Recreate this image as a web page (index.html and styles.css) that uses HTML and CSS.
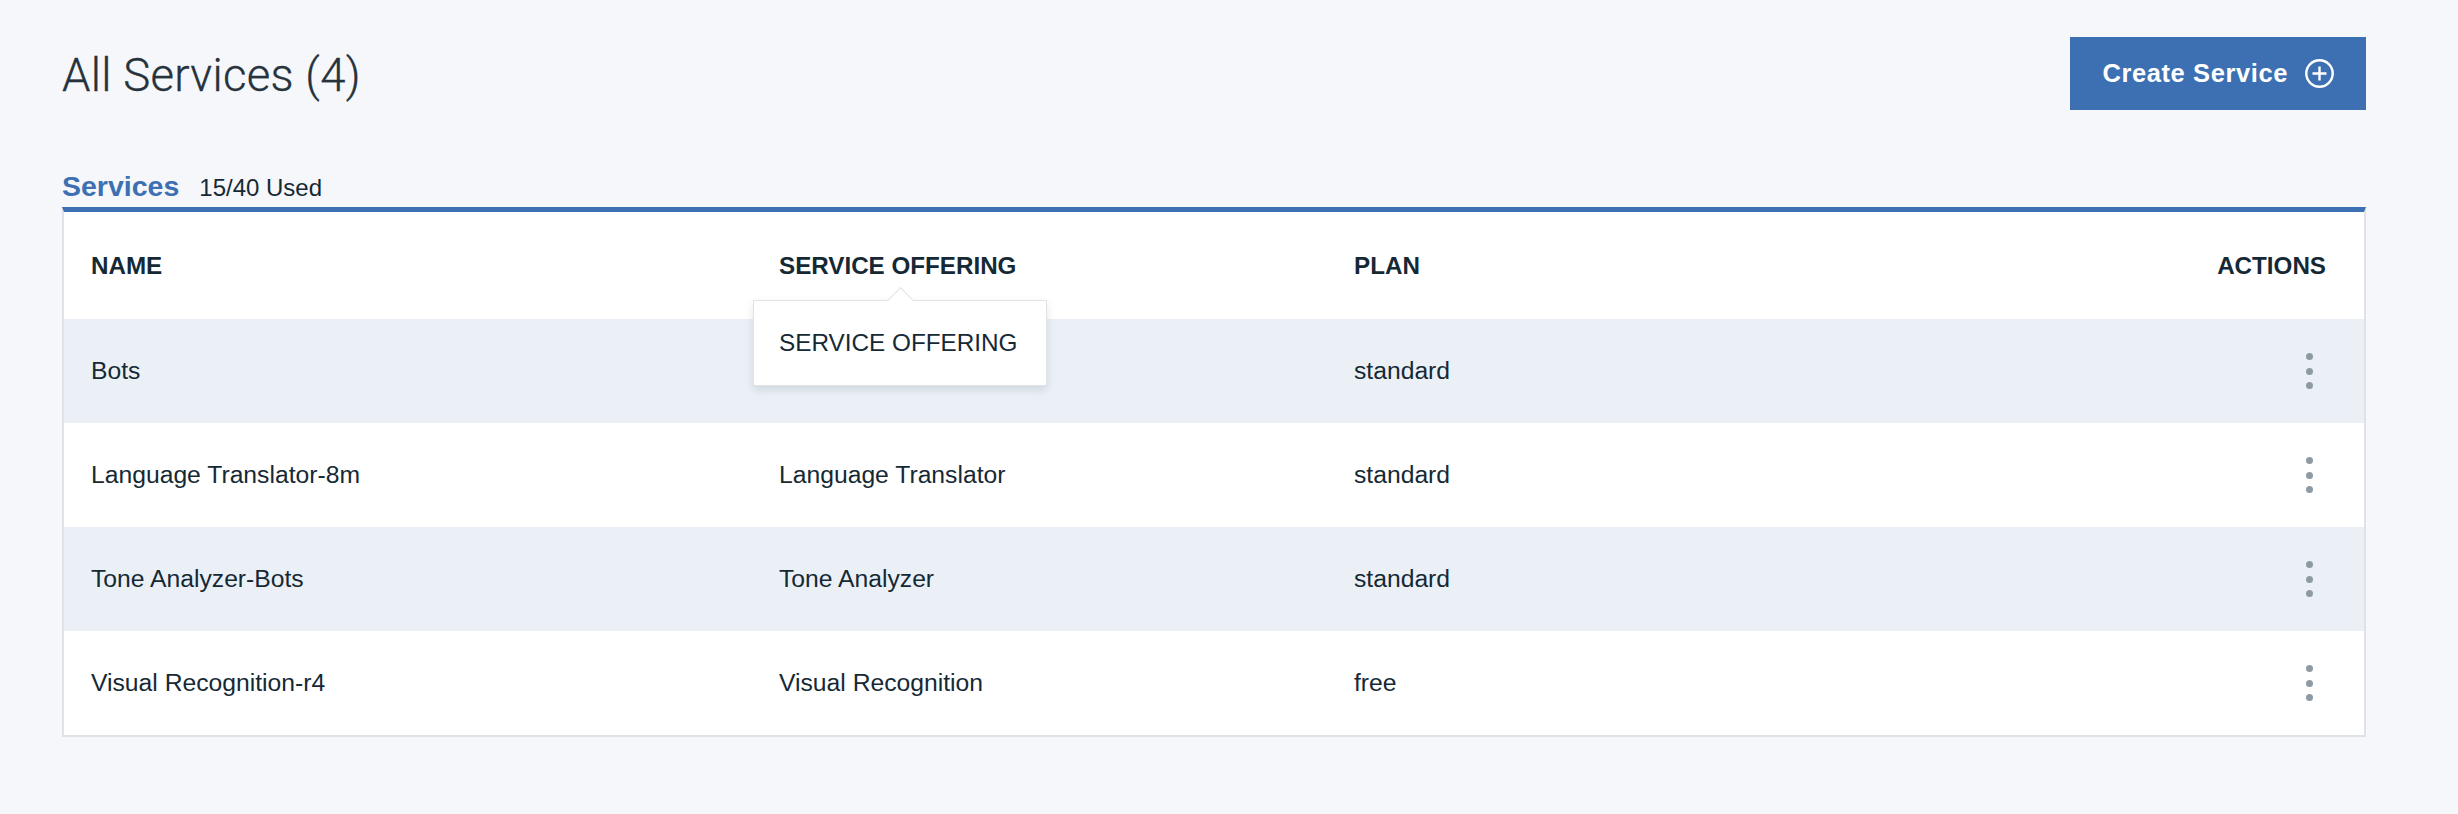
FILE: index.html
```html
<!DOCTYPE html>
<html lang="en">
<head>
<meta charset="utf-8">
<title>All Services</title>
<link rel="stylesheet" href="styles.css">
</head>
<body>
<div class="page">
  <header class="page-header">
    <h1 class="title">All Services (4)</h1>
    <button class="btn-primary" type="button">
      <span class="btn-label">Create Service</span>
      <svg class="btn-icon" width="29" height="29" viewBox="0 0 29 29" aria-hidden="true">
        <circle cx="14.5" cy="14.5" r="13.2" fill="none" stroke="#fff" stroke-width="2.4"/>
        <path d="M14.5 7.5v14M7.5 14.5h14" stroke="#fff" stroke-width="2.4" fill="none"/>
      </svg>
    </button>
  </header>

  <div class="tab-row">
    <span class="tab-label">Services</span>
    <span class="tab-count">15/40 Used</span>
  </div>

  <div class="table">
    <div class="row head">
      <div class="cell">NAME</div>
      <div class="cell has-tip">SERVICE OFFERING
        <div class="tooltip">SERVICE OFFERING</div>
      </div>
      <div class="cell">PLAN</div>
      <div class="cell actions">ACTIONS</div>
    </div>
    <div class="row alt">
      <div class="cell">Bots</div>
      <div class="cell"></div>
      <div class="cell">standard</div>
      <div class="cell actions"><span class="kebab"><i></i><i></i><i></i></span></div>
    </div>
    <div class="row">
      <div class="cell">Language Translator-8m</div>
      <div class="cell">Language Translator</div>
      <div class="cell">standard</div>
      <div class="cell actions"><span class="kebab"><i></i><i></i><i></i></span></div>
    </div>
    <div class="row alt">
      <div class="cell">Tone Analyzer-Bots</div>
      <div class="cell">Tone Analyzer</div>
      <div class="cell">standard</div>
      <div class="cell actions"><span class="kebab"><i></i><i></i><i></i></span></div>
    </div>
    <div class="row">
      <div class="cell">Visual Recognition-r4</div>
      <div class="cell">Visual Recognition</div>
      <div class="cell">free</div>
      <div class="cell actions"><span class="kebab"><i></i><i></i><i></i></span></div>
    </div>
  </div>
</div>
</body>
</html>
```

FILE: styles.css
```css
* { box-sizing: border-box; }

html, body {
  margin: 0;
  padding: 0;
  background: #f5f7fa;
  font-family: "Liberation Sans", Arial, Helvetica, sans-serif;
  color: #152935;
}

.page {
  padding: 37px 92px 0 62px;
}

.page-header {
  display: flex;
  justify-content: space-between;
  align-items: flex-start;
}

.title {
  margin: 0;
  padding-top: 17px;
  font-family: Roboto, "Liberation Sans", sans-serif;
  font-weight: 300;
  font-size: 45.5px;
  line-height: 44px;
  color: #26323c;
  letter-spacing: 0.3px;
  -webkit-text-stroke: 0.3px #26323c;
}

.btn-primary {
  display: flex;
  align-items: center;
  gap: 17px;
  height: 73px;
  padding: 0 32px;
  border: 0;
  background: #3d70b2;
  color: #fff;
  font-family: "Liberation Sans", Arial, sans-serif;
  font-weight: 700;
  font-size: 25.5px;
  letter-spacing: 0.6px;
  cursor: pointer;
}

.btn-icon { display: block; }

.tab-row {
  display: flex;
  align-items: baseline;
  gap: 20px;
  margin-top: 60px;
  height: 37px;
  line-height: 32px;
}

.tab-label {
  font-weight: 700;
  font-size: 28.5px;
  color: #3d70b2;
}

.tab-count {
  font-size: 24px;
  color: #152935;
}

.table {
  border-top: 5px solid #3d70b2;
  border-left: 2px solid #dfe3e8;
  border-right: 2px solid #dfe3e8;
  border-bottom: 2px solid #dfe3e8;
  background: #fff;
}

.row {
  display: grid;
  grid-template-columns: 688px 575px 700px 1fr;
  height: 104px;
  align-items: center;
  font-size: 24.7px;
}

.row.head {
  height: 107px;
  font-weight: 700;
  font-size: 24.2px;
}

.row.alt { background: #ebf0f7; }

.cell {
  padding-left: 27px;
  white-space: nowrap;
}

.cell.actions {
  display: flex;
  justify-content: flex-end;
  padding-left: 0;
  padding-right: 38px;
}

.row:not(.head) .cell.actions { padding-right: 51px; }

.has-tip { position: relative; }

.tooltip {
  position: absolute;
  left: 1px;
  top: 48px;
  width: 294px;
  height: 86px;
  padding: 0 25px;
  display: flex;
  align-items: center;
  background: #fff;
  border: 1px solid #dfe3e6;
  box-shadow: 0 4px 8px rgba(21, 41, 53, 0.12);
  font-weight: 400;
  font-size: 24.3px;
  z-index: 2;
}

.tooltip::before {
  content: "";
  position: absolute;
  top: -10px;
  left: calc(50% - 9px);
  width: 18px;
  height: 18px;
  background: #fff;
  border-top: 1px solid #dfe3e6;
  border-left: 1px solid #dfe3e6;
  transform: rotate(45deg);
}

.kebab {
  display: flex;
  flex-direction: column;
  gap: 7.5px;
}

.kebab i {
  display: block;
  width: 7px;
  height: 7px;
  border-radius: 50%;
  background: #8e9aa3;
}
```
